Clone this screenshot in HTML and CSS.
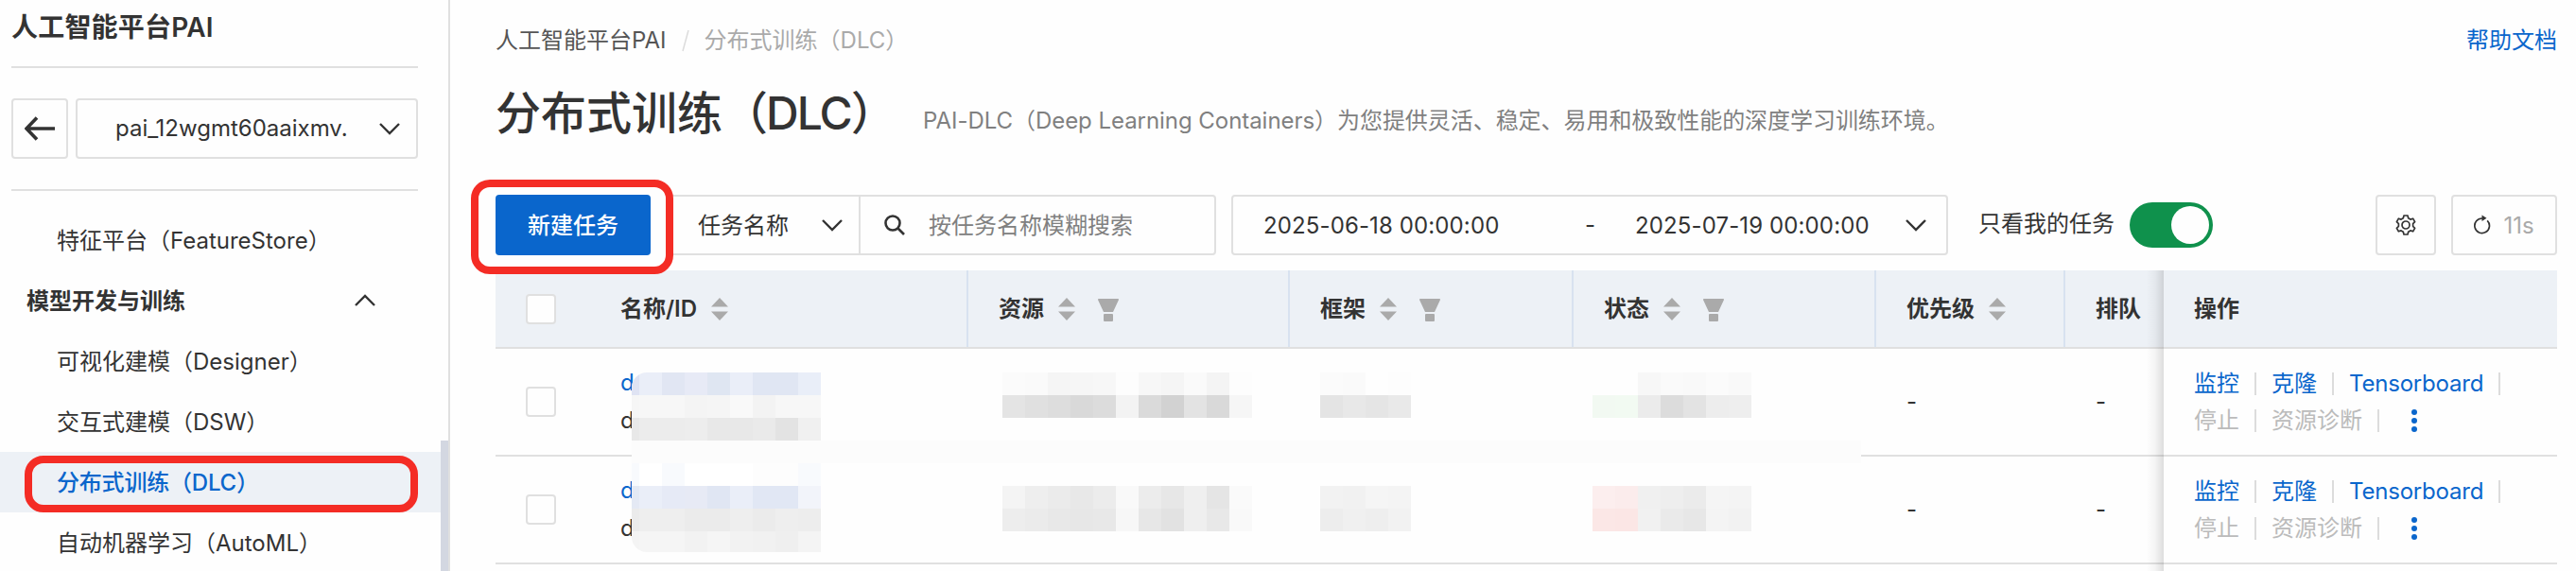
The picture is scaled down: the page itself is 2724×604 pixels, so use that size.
FILE: index.html
```html
<!DOCTYPE html>
<html lang="zh-CN">
<head>
  <meta charset="UTF-8">
  <title>分布式训练（DLC）</title>
  <link rel="stylesheet" href="styles.css">
</head>
<body>
  <svg class="sprite">
    <symbol id="down" viewBox="0 0 24 14"><path d="M2 2l10 10L22 2" fill="none" stroke="currentColor" stroke-width="2.4"/></symbol>
    <symbol id="sort" viewBox="0 0 18 24"><path d="M9 0l9 9.5H0zM9 24l9-9.5H0z" fill="currentColor"/></symbol>
    <symbol id="filter" viewBox="0 0 22 24"><path d="M1 0h20q1.500 0 .8 1.500L16 14H6L.2 1.500Q-.5 0 1 0z" fill="currentColor"/><rect x="6" y="16" width="10" height="8" rx="1" fill="currentColor"/></symbol>
    <symbol id="more" viewBox="0 0 6 26"><g fill="currentColor"><circle cx="3" cy="4" r="3"/><circle cx="3" cy="13" r="3"/><circle cx="3" cy="22" r="3"/></g></symbol>
  </svg>

  <div class="app">
    <aside class="sidebar">
      <div class="product">人工智能平台PAI</div>
      <div class="workspace">
        <div class="back">
          <svg width="32" height="26" viewBox="0 0 32 26"><path d="M13 1.500L2 13l11 11.500M2 13h30" fill="none" stroke="currentColor" stroke-width="3.600"/></svg>
        </div>
        <div class="space-select">
          <span>pai_12wgmt60aaixmv.</span>
          <svg width="24" height="14"><use href="#down"/></svg>
        </div>
      </div>
      <nav class="menu">
        <a class="item">特征平台（FeatureStore）</a>
        <div class="group">
          <span>模型开发与训练</span>
          <svg class="up" width="24" height="14"><use href="#down"/></svg>
        </div>
        <a class="item">可视化建模（Designer）</a>
        <a class="item">交互式建模（DSW）</a>
        <a class="item active">分布式训练（DLC）<i class="mark mark-menu"></i></a>
        <a class="item">自动机器学习（AutoML）</a>
      </nav>
      <div class="scrollbar"></div>
    </aside>

    <main class="main">
      <div class="crumbs">
        <span>人工智能平台PAI</span>
        <svg width="8" height="24" viewBox="0 0 8 24"><path d="M7 1L1 23" stroke="#dcdcdc" stroke-width="1.500"/></svg>
        <span class="current">分布式训练（DLC）</span>
        <a class="help">帮助文档</a>
      </div>
      <div class="heading">
        <h1>分布式训练（<span>DLC</span>）</h1>
        <p>PAI-DLC（Deep Learning Containers）为您提供灵活、稳定、易用和极致性能的深度学习训练环境。</p>
      </div>

      <div class="toolbar">
        <div class="create">新建任务<i class="mark mark-create"></i></div>
        <div class="search">
          <div class="search-type">
            <span>任务名称</span>
            <svg width="24" height="14"><use href="#down"/></svg>
          </div>
          <div class="search-input">
            <svg width="22" height="22" viewBox="0 0 22 22" fill="none" stroke="currentColor" stroke-width="2.600"><circle cx="9" cy="9" r="7.500"/><path d="M14 14l7 7"/></svg>
            <span>按任务名称模糊搜索</span>
          </div>
        </div>
        <div class="dates">
          <span class="date">2025-06-18 00:00:00</span>
          <span class="dash">-</span>
          <span class="date">2025-07-19 00:00:00</span>
          <svg width="24" height="14"><use href="#down"/></svg>
        </div>
        <span class="only-mine">只看我的任务</span>
        <div class="switch"></div>
        <div class="tool setting">
          <svg width="22" height="22" viewBox="0 0 22 22" fill="none" stroke="currentColor" stroke-width="1.700" stroke-linejoin="round"><path d="M9 1h4l.7 2.800 2.200 1.300 2.700-.9 2 3.500-2 2v2.600l2 2-2 3.500-2.700-.9-2.200 1.300L13 21H9l-.7-2.800-2.200-1.300-2.700.9-2-3.500 2-2V9.700l-2-2 2-3.500 2.700.9 2.200-1.300z"/><circle cx="11" cy="11" r="4"/></svg>
        </div>
        <div class="tool refresh">
          <svg width="18" height="22" viewBox="0 0 18 22"><path d="M14.200 6.300A7.800 7.800 0 1 1 9 4" fill="none" stroke="currentColor" stroke-width="1.700"/><path d="M8.500 .5l5 3.300-5 3.200z" fill="currentColor"/></svg>
          <span>11s</span>
        </div>
      </div>

      <div class="table">
        <div class="row head">
          <div class="cell check"><i class="box"></i></div>
          <div class="cell">名称/ID<svg class="sort" width="18" height="24"><use href="#sort"/></svg></div>
          <div class="cell">资源<svg class="sort" width="18" height="24"><use href="#sort"/></svg><svg class="filter" width="22" height="24"><use href="#filter"/></svg></div>
          <div class="cell">框架<svg class="sort" width="18" height="24"><use href="#sort"/></svg><svg class="filter" width="22" height="24"><use href="#filter"/></svg></div>
          <div class="cell">状态<svg class="sort" width="18" height="24"><use href="#sort"/></svg><svg class="filter" width="22" height="24"><use href="#filter"/></svg></div>
          <div class="cell">优先级<svg class="sort" width="18" height="24"><use href="#sort"/></svg></div>
          <div class="cell">排队</div>
          <div class="cell fixed">操作</div>
        </div>
        <div class="row">
          <div class="cell check"><i class="box"></i></div>
          <div class="cell name"><a>d</a><span>d</span></div>
          <div class="cell"></div>
          <div class="cell"></div>
          <div class="cell"></div>
          <div class="cell">-</div>
          <div class="cell">-</div>
          <div class="cell fixed">
            <div class="actions"><a>监控</a><a>克隆</a><a class="latin">Tensorboard</a></div>
            <div class="actions disabled"><a>停止</a><a>资源诊断</a><svg class="more" width="6" height="26"><use href="#more"/></svg></div>
          </div>
        </div>
        <div class="row">
          <div class="cell check"><i class="box"></i></div>
          <div class="cell name"><a>d</a><span>d</span></div>
          <div class="cell"></div>
          <div class="cell"></div>
          <div class="cell"></div>
          <div class="cell">-</div>
          <div class="cell">-</div>
          <div class="cell fixed">
            <div class="actions"><a>监控</a><a>克隆</a><a class="latin">Tensorboard</a></div>
            <div class="actions disabled"><a>停止</a><a>资源诊断</a><svg class="more" width="6" height="26"><use href="#more"/></svg></div>
          </div>
        </div>
        <div class="row last">
          <div class="cell"></div><div class="cell"></div><div class="cell"></div><div class="cell"></div>
          <div class="cell"></div><div class="cell"></div><div class="cell"></div><div class="cell fixed"></div>
        </div>
        <svg class="mosaic" id="mosaic" width="1300" height="190"></svg>
      </div>
    </main>
  </div>
  <script src="mosaic.js"></script>
</body>
</html>
```
FILE: mosaic.js
```js
// 打码区域：每块 24px，[x, y, 颜色列表]
const SIZE = 24;
const blocks = [
  [-16, 0, 'dfe3f3 eaeef8 e1e6f3 e7eaf6 dfe6f2 eaeef8 e0e6f3 e0e6f3 e9eef8'],
  [-16, 24, 'f6f6f6 f7f7f7 f7f7f7 f4f4f4 f5f5f5 f9f9f9 f3f3f3 f7f7f7 f7f7f7'],
  [-16, 48, 'e8e8e8 ececec ececec ededed e8e8e8 e8e8e8 eaeaea e3e3e3 f0f0f0'],
  [-16, 96, 'f8fafd ffffff f8fafd ffffff ffffff ffffff fdfdfd fdfdfd f8fafd'],
  [-16, 120, 'e4e9f4 eaeef8 e6eaf6 e7eaf5 e0e6f3 eaeef8 e1e7f4 e1e7f4 f2f4fa'],
  [-16, 144, 'ebebeb eeeeee eeeeee ebebeb ebebeb eeeeee ebebeb eeeeee ededed'],
  [-16, 168, 'f4f4f4 f5f5f5 f5f5f5 f2f2f2 f5f5f5 f2f2f2 f1f1f1 efefef f4f4f4'],
  [392, 0, 'fbfbfb fafafa f5f5f5 f6f6f6 f7f7f7 fdfdfd f7f7f7 f5f5f5 fafafa f4f4f4 fdfdfd'],
  [392, 24, 'e4e4e4 e0e0e0 dddddd d9d9d9 dcdcdc f3f3f3 dadada d2d2d2 e3e3e3 d9d9d9 f6f6f6'],
  [392, 120, 'f4f4f4 eeeeee ebebeb e8e8e8 ececec f9f9f9 ececec e7e7e7 efefef e5e5e5 fafafa'],
  [392, 144, 'ededed ebebeb e8e8e8 e7e7e7 e8e8e8 f7f7f7 e7e7e7 e2e2e2 efefef e8e8e8 f9f9f9'],
  [728, 0, 'fbfbfb fafafa fefefe fdfdfd'],
  [728, 24, 'e4e4e4 e8e8e8 e5e5e5 e9e9e9'],
  [728, 120, 'f2f2f2 f1f1f1 f5f5f5 f4f4f4'],
  [728, 144, 'ededed f0f0f0 eeeeee f2f2f2'],
  [1016, 0, 'fefefe fefefe f7f7f7 fafafa f9f9f9 fbfbfb f9f9f9'],
  [1016, 24, 'f2f9f2 f2faf2 ebebeb dcdcdc e3e3e3 ededed eeeeee'],
  [1016, 120, 'fceeee fbecec f0f0f0 eeeeee ebebeb f5f5f5 f4f4f4'],
  [1016, 144, 'fbe7e6 fbe6e5 f1f1f1 eaeaea e7e7e7 f4f4f4 f2f2f2']
];

const mosaic = document.getElementById('mosaic');

function addRect(x, y, w, color) {
  const rect = document.createElementNS('http://www.w3.org/2000/svg', 'rect');
  rect.setAttribute('x', x);
  rect.setAttribute('y', y);
  rect.setAttribute('width', w);
  rect.setAttribute('height', SIZE);
  rect.setAttribute('fill', color);
  mosaic.appendChild(rect);
}

addRect(0, 72, 1300, '#fcfcfc');
blocks.forEach(([x, y, colors]) => {
  colors.split(' ').forEach((color, i) => addRect(x + i * SIZE, y, SIZE, '#' + color));
});
```
FILE: styles.css
```css
* {
  box-sizing: border-box;
}

body {
  margin: 0;
  font-family: Inter, 'Noto Sans CJK SC', sans-serif;
  font-size: 24px;
  line-height: 36px;
  color: #333;
  background: #fefefe;
  overflow: hidden;
}

svg {
  display: block;
  flex: none;
}

.sprite {
  position: absolute;
  width: 0;
  height: 0;
}

.app {
  display: flex;
  height: 604px;
  overflow: hidden;
}

/* 侧边栏 */
.sidebar {
  position: relative;
  flex: none;
  width: 476px;
  border-right: 2px solid #e0e0e0;
}

.product {
  height: 72px;
  margin: 0 32px 0 12px;
  padding-top: 11px;
  border-bottom: 2px solid #e0e0e0;
  font-size: 28px;
  font-weight: 600;
  letter-spacing: 0.2px;
}

.workspace {
  display: flex;
  gap: 8px;
  height: 130px;
  margin: 0 32px 20px 12px;
  padding: 32px 0;
  border-bottom: 2px solid #e0e0e0;
}

.back,
.space-select {
  display: flex;
  align-items: center;
  justify-content: center;
  height: 64px;
  border: 2px solid #e0e0e0;
  border-radius: 4px;
}

.back {
  width: 60px;
}

.space-select {
  flex: 1;
  justify-content: space-between;
  padding: 0 16px 0 40px;
}

.item,
.group {
  display: flex;
  align-items: center;
  height: 64px;
  padding: 2px 0 0 60px;
}

.group {
  justify-content: space-between;
  padding: 0 76px 0 28px;
  font-weight: 600;
}

.group span {
  padding-top: 2px;
}

.up {
  transform: rotate(180deg);
}

.active {
  position: relative;
  color: #0a66cc;
  font-weight: 500;
  letter-spacing: -0.2px;
  background: #edf1f6;
}

.scrollbar {
  position: absolute;
  top: 466px;
  right: 0;
  width: 8px;
  height: 138px;
  background: #d3d7e1;
}

/* 红色标注框 */
.mark {
  position: absolute;
  border: 8px solid #f42c25;
  border-radius: 20px;
}

.mark-menu {
  top: 4px;
  left: 26px;
  width: 416px;
  height: 60px;
}

.mark-create {
  top: -16px;
  left: -26px;
  width: 214px;
  height: 100px;
  z-index: 2;
}

/* 主区域 */
.main {
  flex: 1;
  padding: 25px 20px 0 48px;
}

.crumbs {
  display: flex;
  align-items: center;
  gap: 16px;
  height: 36px;
  color: #555;
}

.current {
  color: #aaa;
}

.help {
  margin-left: auto;
  color: #0a66cc;
}

.heading {
  display: flex;
  align-items: center;
  height: 120px;
  margin-bottom: 25px;
}

.heading h1 {
  width: 432px;
  margin: 0;
  padding-bottom: 2px;
  font-size: 48px;
  line-height: 72px;
  font-weight: 500;
  white-space: nowrap;
}

.heading h1 span {
  margin-left: -2px;
  letter-spacing: -2px;
}

.heading p {
  margin: 13px 0 0 20px;
  color: #808080;
  letter-spacing: -0.05px;
}

.toolbar {
  display: flex;
  height: 64px;
  margin-bottom: 16px;
}

.create {
  position: relative;
  width: 164px;
  border-radius: 4px;
  background: #0a66cc;
  color: #fff;
  font-weight: 500;
  line-height: 66px;
  text-align: center;
}

.search {
  display: flex;
  width: 582px;
  margin-left: 16px;
  border: 2px solid #e0e0e0;
  border-radius: 4px;
}

.search-type {
  display: flex;
  align-items: center;
  justify-content: space-between;
  width: 204px;
  padding: 0 16px 0 32px;
  border-right: 2px solid #e0e0e0;
}

.search-type span,
.search-input span {
  padding-top: 2px;
}

.search-input {
  display: flex;
  align-items: center;
  gap: 25px;
  padding-left: 25px;
}

.search-input span {
  color: #808080;
}

.dates {
  display: flex;
  align-items: center;
  width: 758px;
  margin-left: 16px;
  padding: 0 20px 0 32px;
  border: 2px solid #e0e0e0;
  border-radius: 4px;
}

.date {
  width: 260px;
  padding-top: 2px;
  letter-spacing: 0.12px;
}

.dash {
  width: 53px;
  margin-left: 80px;
}

.dates svg {
  margin-left: auto;
}

.only-mine {
  margin: 13px 16px 0 32px;
}

.switch {
  width: 88px;
  height: 48px;
  margin-top: 8px;
  padding: 4px;
  border-radius: 24px;
  background: #0f914c;
}

.switch::after {
  content: '';
  display: block;
  width: 40px;
  height: 40px;
  margin-left: auto;
  border-radius: 50%;
  background: #fefefe;
}

.tool {
  display: flex;
  align-items: center;
  justify-content: center;
  border: 2px solid #e0e0e0;
  border-radius: 4px;
}

.setting {
  width: 64px;
  margin-left: auto;
}

.refresh {
  gap: 13px;
  width: 112px;
  margin-left: 16px;
}

.refresh span {
  padding-top: 2px;
  color: #aaa;
}

/* 表格 */
.table {
  position: relative;
}

.row {
  display: grid;
  grid-template-columns: 100px 400px 340px 300px 320px 200px 104px 416px;
  height: 114px;
  border-bottom: 2px solid #e0e0e0;
}

.cell {
  display: flex;
  align-items: center;
  padding-left: 32px;
}

.head {
  height: 83px;
  background: #edf1f6;
  font-weight: 600;
}

.head .cell:nth-child(n+2):nth-child(-n+6) {
  border-right: 2px solid #d8e2f0;
}

.box {
  width: 32px;
  height: 32px;
  border: 2px solid #e0e0e0;
  border-radius: 4px;
  background: #fefefe;
}

.sort,
.filter {
  color: #aaa;
}

.sort {
  margin-left: 15px;
}

.filter {
  margin: 2px 0 0 24px;
}

.name {
  flex-direction: column;
  align-items: flex-start;
  justify-content: center;
  line-height: 40px;
}

.name a {
  color: #0a66cc;
}

.fixed {
  position: relative;
}

/* 固定列左侧阴影 */
.fixed::before {
  content: '';
  position: absolute;
  top: 0;
  bottom: -2px;
  left: -18px;
  width: 18px;
  background: linear-gradient(to right, rgba(0, 0, 0, 0), rgba(0, 0, 0, 0.04) 50%, rgba(0, 0, 0, 0.13));
}

.row:not(.head) .fixed {
  flex-direction: column;
  align-items: flex-start;
  justify-content: center;
}

.actions {
  display: flex;
  align-items: center;
  height: 39px;
}

.actions a {
  display: flex;
  align-items: center;
  color: #0a66cc;
}

.actions a::after {
  content: '';
  width: 2px;
  height: 24px;
  margin: 0 16px;
  background: #dcdcdc;
}

.actions .latin {
  letter-spacing: -0.2px;
}

.actions.disabled a {
  color: #bbb;
}

.more {
  margin-left: 18px;
  color: #0a66cc;
}

.mosaic {
  position: absolute;
  top: 108px;
  left: 144px;
  background: #fefefe;
  border-radius: 16px 0 0 16px;
}
```
